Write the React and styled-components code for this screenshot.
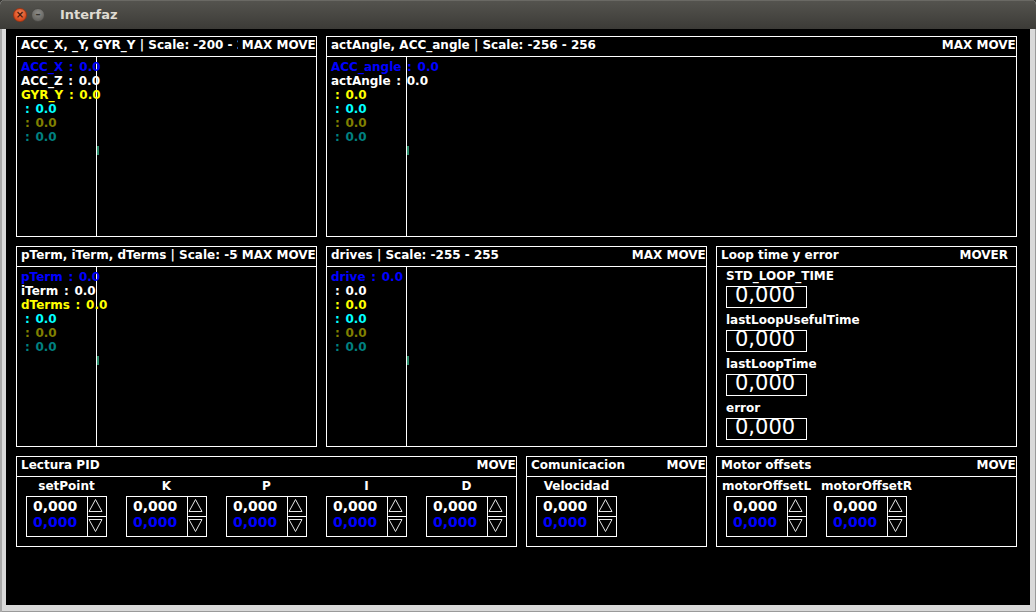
import styled, { createGlobalStyle } from "styled-components";

const GlobalStyle = createGlobalStyle`
  html, body {
    margin: 0;
    padding: 0;
    background: #3c3b37;
  }
  body {
    font-family: "DejaVu Sans", "Liberation Sans", sans-serif;
  }
  * {
    box-sizing: border-box;
  }
`;

const Window = styled.div`
  width: 1036px;
  height: 612px;
  display: flex;
  flex-direction: column;
  background: #d9d9d9;
  border-radius: 5px 5px 0 0;
  box-shadow: inset 2px 0 0 #a9a9a9, inset -1px -1px 0 #9a9a9a;
  overflow: hidden;
`;

const TitleBar = styled.div`
  height: 29px;
  flex-shrink: 0;
  display: flex;
  align-items: center;
  padding-left: 13px;
  background: linear-gradient(#55544f, #3c3b37);
  box-shadow: inset 0 1px 0 #6a6964;
`;

const WinButton = styled.span`
  width: 14px;
  height: 14px;
  margin-right: 4px;
  border-radius: 50%;
  display: flex;
  align-items: center;
  justify-content: center;
  font-size: 10px;
  font-weight: bold;
  line-height: 1;
  color: ${(p) => (p.$close ? "#4a1707" : "#36352f")};
  background: ${(p) =>
    p.$close
      ? "radial-gradient(circle at 50% 35%, #f4875a, #d94a1e 70%)"
      : "radial-gradient(circle at 50% 35%, #8e8d89, #676662 70%)"};
  border: 1px solid ${(p) => (p.$close ? "#9c3514" : "#4a4945")};
`;

const WindowTitle = styled.span`
  margin-left: 11px;
  font: bold 13px "DejaVu Sans", sans-serif;
  color: #dfdbd2;
`;

const Screen = styled.main`
  flex: 1;
  margin: 0 6px 7px;
  padding: 7px 0 0 10px;
  background: #000;
  display: flex;
  flex-direction: column;
  gap: 9px;
`;

const Row = styled.div`
  display: flex;
  gap: 9px;
`;

const Panel = styled.section`
  width: ${(p) => p.$w}px;
  height: ${(p) => p.$h}px;
  border: 1px solid #fff;
  display: flex;
  flex-direction: column;
  overflow: hidden;
  color: #fff;
  font: bold 12px "DejaVu Sans", sans-serif;
`;

const PanelHeader = styled.header`
  height: 20px;
  flex-shrink: 0;
  display: flex;
  border-bottom: 1px solid #fff;
  overflow: hidden;
  line-height: 16px;
  white-space: nowrap;
`;

const PanelTitle = styled.div`
  flex: 1;
  min-width: 0;
  overflow: hidden;
  padding-left: 4px;
`;

const HeaderAction = styled.div`
  flex-shrink: 0;
  padding-left: 4px;
  margin-right: ${(p) => p.$offset}px;
  background: #000;
`;

const ChartBody = styled.div`
  flex: 1;
  position: relative;
`;

const ChartCanvas = styled.svg`
  display: block;
  width: 100%;
  height: 100%;
`;

const Legend = styled.div`
  position: absolute;
  top: 3px;
  left: 4px;
  line-height: 14px;
  white-space: pre;
  word-spacing: 1.5px;
`;

const LegendRow = styled.div`
  color: ${(p) => p.$color};
`;

const FieldList = styled.div`
  padding-left: 9px;
  display: flex;
  flex-direction: column;
  gap: 3px;
`;

const FieldLabel = styled.div`
  line-height: 18px;
  margin-bottom: 1px;
`;

const ValueBox = styled.div`
  width: 81px;
  height: 22px;
  border: 1px solid #fff;
  padding-left: 8px;
  font: 21px/16px "DejaVu Sans", sans-serif;
`;

const SpinnerRow = styled.div`
  display: flex;
  gap: 19px;
  padding: 1px 9px 0;
`;

const SpinnerCol = styled.div`
  width: 81px;
  display: flex;
  flex-direction: column;
  align-items: center;
`;

const SpinnerLabel = styled.div`
  line-height: 16px;
  margin-bottom: 2px;
  white-space: nowrap;
`;

const Spinner = styled.div`
  width: 81px;
  height: 41px;
  border: 1px solid #fff;
  display: flex;
`;

const SpinnerValues = styled.div`
  width: 61px;
  padding: 1px 0 0 6px;
  border-right: 1px solid #fff;
  font-size: 14px;
  line-height: 16px;
`;

const SpinnerValue = styled.div`
  color: ${(p) => p.$color};
`;

const SpinnerArrows = styled.div`
  flex: 1;
  display: flex;
  flex-direction: column;
`;

const ArrowButton = styled.div`
  height: ${(p) => (p.$down ? 20 : 19)}px;
  border-top: ${(p) => (p.$down ? "1px solid #fff" : "none")};

  svg {
    display: block;
  }
`;

const charts = [
  {
    title: "ACC_X, _Y, GYR_Y | Scale: -200 - 200",
    w: 301,
    legend: ["ACC_X", "ACC_Z", "GYR_Y", "", "", ""],
  },
  {
    title: "actAngle, ACC_angle | Scale: -256 - 256",
    w: 691,
    legend: ["ACC_angle", "actAngle", "", "", "", ""],
  },
  {
    title: "pTerm, iTerm, dTerms | Scale: -500 - 500",
    w: 301,
    legend: ["pTerm", "iTerm", "dTerms", "", "", ""],
  },
  {
    title: "drives | Scale: -255 - 255",
    w: 381,
    legend: ["drive", "", "", "", "", ""],
  },
];

const legendColors = ["#0000ff", "#ffffff", "#ffff00", "#00ffff", "#808000", "#008080"];

// empty names keep a narrow lead space (U+2004) that word-spacing leaves alone
const legendText = (name) => (name ? `${name} : 0.0` : "\u2004: 0.0");

const ChartPanel = ({ title, w, legend }) => (
  <Panel $w={w} $h={201}>
    <PanelHeader>
      <PanelTitle>{title}</PanelTitle>
      <HeaderAction $offset={-9}>MAX MOVER</HeaderAction>
    </PanelHeader>
    <ChartBody>
      <ChartCanvas>
        <line x1="79.5" y1="0" x2="79.5" y2="100%" stroke="#fff" strokeWidth="1" />
        <line x1="81" y1="89" x2="81" y2="98" stroke="#2e8f6e" strokeWidth="2" />
      </ChartCanvas>
      <Legend>
        {legend.map((name, i) => (
          <LegendRow key={i} $color={legendColors[i]}>
            {legendText(name)}
          </LegendRow>
        ))}
      </Legend>
    </ChartBody>
  </Panel>
);

const LoopPanel = () => (
  <Panel $w={301} $h={201}>
    <PanelHeader>
      <PanelTitle>Loop time y error</PanelTitle>
      <HeaderAction $offset={8}>MOVER</HeaderAction>
    </PanelHeader>
    <FieldList>
      {["STD_LOOP_TIME", "lastLoopUsefulTime", "lastLoopTime", "error"].map((label) => (
        <div key={label}>
          <FieldLabel>{label}</FieldLabel>
          <ValueBox>0,000</ValueBox>
        </div>
      ))}
    </FieldList>
  </Panel>
);

const Arrow = ({ down }) => (
  <ArrowButton $down={down}>
    <svg width="18" height="19">
      <polygon
        points={down ? "1,2.5 14,2.5 7.5,14.5" : "1,14.5 7.5,2.5 14,14.5"}
        fill="none"
        stroke="#e6e6e6"
        strokeWidth="1"
      />
    </svg>
  </ArrowButton>
);

const SpinnerPanel = ({ title, w, labels }) => (
  <Panel $w={w} $h={91}>
    <PanelHeader>
      <PanelTitle>{title}</PanelTitle>
      <HeaderAction $offset={-9}>MOVER</HeaderAction>
    </PanelHeader>
    <SpinnerRow>
      {labels.map((label) => (
        <SpinnerCol key={label}>
          <SpinnerLabel>{label}</SpinnerLabel>
          <Spinner>
            <SpinnerValues>
              <SpinnerValue $color="#ffffff">0,000</SpinnerValue>
              <SpinnerValue $color="#0000ff">0,000</SpinnerValue>
            </SpinnerValues>
            <SpinnerArrows>
              <Arrow />
              <Arrow down />
            </SpinnerArrows>
          </Spinner>
        </SpinnerCol>
      ))}
    </SpinnerRow>
  </Panel>
);

export default function App() {
  return (
    <>
      <GlobalStyle />
      <Window>
        <TitleBar>
          <WinButton $close>×</WinButton>
          <WinButton>–</WinButton>
          <WindowTitle>Interfaz</WindowTitle>
        </TitleBar>
        <Screen>
          <Row>
            <ChartPanel {...charts[0]} />
            <ChartPanel {...charts[1]} />
          </Row>
          <Row>
            <ChartPanel {...charts[2]} />
            <ChartPanel {...charts[3]} />
            <LoopPanel />
          </Row>
          <Row>
            <SpinnerPanel title="Lectura PID" w={501} labels={["setPoint", "K", "P", "I", "D"]} />
            <SpinnerPanel title="Comunicacion" w={181} labels={["Velocidad"]} />
            <SpinnerPanel title="Motor offsets" w={301} labels={["motorOffsetL", "motorOffsetR"]} />
          </Row>
        </Screen>
      </Window>
    </>
  );
}
